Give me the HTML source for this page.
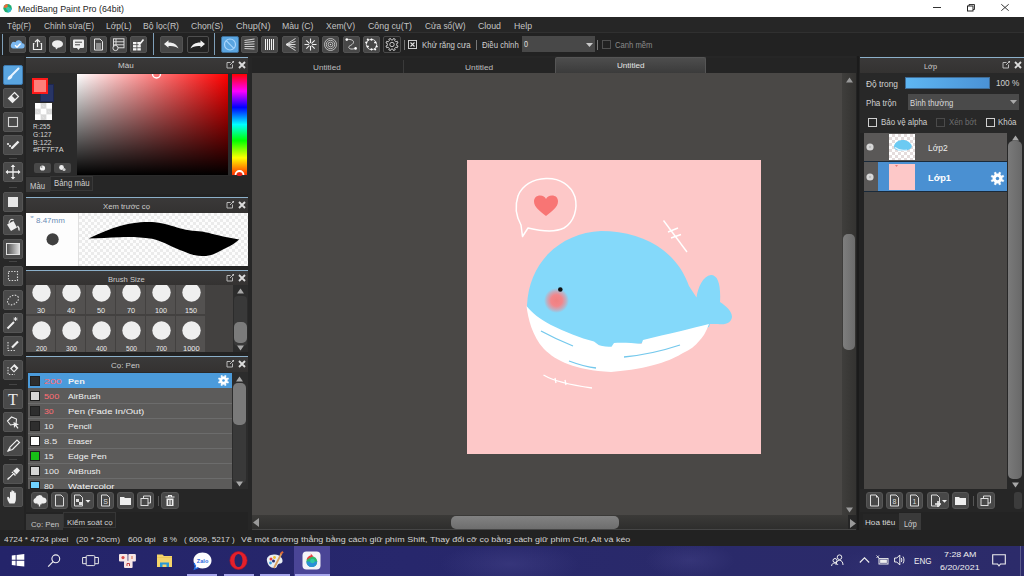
<!DOCTYPE html><html><head><meta charset="utf-8"><style>
*{margin:0;padding:0;box-sizing:border-box}
html,body{width:1024px;height:576px;overflow:hidden;background:#262626;font-family:"Liberation Sans",sans-serif;font-size:10px;color:#d0d0d0}
.a{position:absolute}
.t{position:absolute;white-space:nowrap;line-height:1}
svg{position:absolute;overflow:visible}
</style></head><body>
<div class="a" style="left:0px;top:0px;width:1024px;height:17px;background:#fff"></div>
<svg style="left:3px;top:3px" width="9" height="10" viewBox="0 0 9 10"><circle cx="4.6" cy="5.2" r="4.2" fill="#1fae6e"/><path d="M4.6 1A4.2 4.2 0 0 0 .6 4.4L4.6 5.2Z" fill="#f06a3a"/><path d="M4.6 5.2L8.8 5.2A4.2 4.2 0 0 1 4.6 9.4Z" fill="#2fb8c8"/><circle cx="5" cy="5.6" r="1.8" fill="#3cc6a8"/></svg>
<div class="t" id="t0" style="left:17.80px;top:5.15px;font-size:8.35px;color:#1e1e1e;;transform:scaleX(1.0580);transform-origin:0 0;">MediBang Paint Pro (64bit)</div>
<div class="a" style="left:933px;top:7px;width:8px;height:1px;background:#333"></div>
<svg style="left:967px;top:4px" width="8" height="7" viewBox="0 0 8 7"><rect x=".5" y="2" width="5.5" height="5" fill="none" stroke="#222" stroke-width="1"/><path d="M2 2V.5H7.5V5.5H6" fill="none" stroke="#222" stroke-width=".9"/></svg>
<svg style="left:1001px;top:4px" width="8" height="7" viewBox="0 0 8 7"><path d="M.3 .3L7.7 6.7M7.7 .3L.3 6.7" stroke="#222" stroke-width=".9"/></svg>
<div class="a" style="left:0px;top:17px;width:1024px;height:16px;background:#262626"></div>
<div class="a" style="left:0px;top:32px;width:1024px;height:1px;background:#303030"></div>
<div class="t" id="t1" style="left:6.90px;top:21.61px;font-size:8.73px;color:#c4c4c4;;transform:scaleX(0.9176);transform-origin:0 0;">Tệp(F)</div>
<div class="t" id="t2" style="left:44.00px;top:21.61px;font-size:8.73px;color:#c4c4c4;;transform:scaleX(0.9639);transform-origin:0 0;">Chỉnh sửa(E)</div>
<div class="t" id="t3" style="left:105.50px;top:21.61px;font-size:8.73px;color:#c4c4c4;;transform:scaleX(0.9778);transform-origin:0 0;">Lớp(L)</div>
<div class="t" id="t4" style="left:143.00px;top:21.61px;font-size:8.73px;color:#c4c4c4;;transform:scaleX(0.9905);transform-origin:0 0;">Bộ lọc(R)</div>
<div class="t" id="t5" style="left:191.00px;top:21.61px;font-size:8.73px;color:#c4c4c4;;transform:scaleX(0.9856);transform-origin:0 0;">Chọn(S)</div>
<div class="t" id="t6" style="left:235.50px;top:21.61px;font-size:8.73px;color:#c4c4c4;;transform:scaleX(1.0469);transform-origin:0 0;">Chụp(N)</div>
<div class="t" id="t7" style="left:282.00px;top:21.61px;font-size:8.73px;color:#c4c4c4;;transform:scaleX(1.0000);transform-origin:0 0;">Màu (C)</div>
<div class="t" id="t8" style="left:326.00px;top:21.61px;font-size:8.73px;color:#c4c4c4;;transform:scaleX(0.9810);transform-origin:0 0;">Xem(V)</div>
<div class="t" id="t9" style="left:368.00px;top:21.61px;font-size:8.73px;color:#c4c4c4;;transform:scaleX(1.0090);transform-origin:0 0;">Công cụ(T)</div>
<div class="t" id="t10" style="left:425.00px;top:21.61px;font-size:8.73px;color:#c4c4c4;;transform:scaleX(0.9495);transform-origin:0 0;">Cửa sổ(W)</div>
<div class="t" id="t11" style="left:478.00px;top:21.61px;font-size:8.73px;color:#c4c4c4;;transform:scaleX(1.0096);transform-origin:0 0;">Cloud</div>
<div class="t" id="t12" style="left:514.00px;top:21.61px;font-size:8.73px;color:#c4c4c4;;transform:scaleX(1.0035);transform-origin:0 0;">Help</div>
<div class="a" style="left:0px;top:33px;width:1024px;height:23px;background:#222222"></div>
<div class="a" style="left:2px;top:34px;width:1px;height:21px;background:#7f9fb8"></div>
<div class="a" style="left:9px;top:36px;width:17px;height:17px;background:#474747;border:1px solid #525252;border-radius:2px"></div>
<div class="a" style="left:29px;top:36px;width:17px;height:17px;background:#474747;border:1px solid #525252;border-radius:2px"></div>
<div class="a" style="left:49px;top:36px;width:17px;height:17px;background:#474747;border:1px solid #525252;border-radius:2px"></div>
<div class="a" style="left:70px;top:36px;width:17px;height:17px;background:#474747;border:1px solid #525252;border-radius:2px"></div>
<div class="a" style="left:90px;top:36px;width:17px;height:17px;background:#474747;border:1px solid #525252;border-radius:2px"></div>
<div class="a" style="left:110px;top:36px;width:17px;height:17px;background:#474747;border:1px solid #525252;border-radius:2px"></div>
<div class="a" style="left:130px;top:36px;width:17px;height:17px;background:#474747;border:1px solid #525252;border-radius:2px"></div>
<div class="a" style="left:153px;top:33px;width:1px;height:22px;background:#7f9fb8"></div>
<div class="a" style="left:160px;top:36px;width:23px;height:17px;background:#474747;border:1px solid #525252;border-radius:2px"></div>
<div class="a" style="left:187px;top:36px;width:22px;height:17px;background:#222;border:1px solid #4e4e4e;border-radius:2px"></div>
<div class="a" style="left:214px;top:33px;width:1px;height:22px;background:#7f9fb8"></div>
<div class="a" style="left:221px;top:36px;width:18px;height:17px;background:#5aa5e0;border:1px solid #3d6f99;border-radius:2px"></div>
<div class="a" style="left:241px;top:36px;width:17px;height:17px;background:#474747;border:1px solid #525252;border-radius:2px"></div>
<div class="a" style="left:261px;top:36px;width:17px;height:17px;background:#474747;border:1px solid #525252;border-radius:2px"></div>
<div class="a" style="left:282px;top:36px;width:17px;height:17px;background:#474747;border:1px solid #525252;border-radius:2px"></div>
<div class="a" style="left:302px;top:36px;width:17px;height:17px;background:#474747;border:1px solid #525252;border-radius:2px"></div>
<div class="a" style="left:322px;top:36px;width:17px;height:17px;background:#474747;border:1px solid #525252;border-radius:2px"></div>
<div class="a" style="left:343px;top:36px;width:17px;height:17px;background:#474747;border:1px solid #525252;border-radius:2px"></div>
<div class="a" style="left:363px;top:36px;width:17px;height:17px;background:#474747;border:1px solid #525252;border-radius:2px"></div>
<div class="a" style="left:383px;top:36px;width:18px;height:17px;background:#232323;border:1px solid #4a4a4a;border-radius:2px"></div>
<svg style="left:9px;top:36px" width="17" height="17" viewBox="0 0 17 17"><path d="M4 12.5H13A2.6 2.6 0 0 0 13.2 7.3A3.6 3.6 0 0 0 6.4 6.2A3 3 0 0 0 4 12.5Z" fill="#7cb8f0"/><path d="M6 9.3L8 11.2L11.6 7.4" fill="none" stroke="#fff" stroke-width="1.4"/></svg>
<svg style="left:29px;top:36px" width="17" height="17" viewBox="0 0 17 17"><path d="M5.5 7.5H4.5V13.5H12.5V7.5H11.5" fill="none" stroke="#eee" stroke-width="1.2"/><path d="M8.5 11V3.5M6 6L8.5 3.5L11 6" fill="none" stroke="#eee" stroke-width="1.2"/></svg>
<svg style="left:49px;top:36px" width="17" height="17" viewBox="0 0 17 17"><ellipse cx="8.5" cy="8" rx="5.5" ry="3.8" fill="#eee"/><path d="M6.5 11L7 13.5L9.5 11.5Z" fill="#eee"/></svg>
<svg style="left:70px;top:36px" width="17" height="17" viewBox="0 0 17 17"><rect x="3" y="3.5" width="11" height="8.5" rx="1" fill="#eee"/><path d="M7 12L8.5 14L10 12Z" fill="#eee"/><path d="M5 6.2H12M5 8.8H10" stroke="#474747" stroke-width="1"/></svg>
<svg style="left:90px;top:36px" width="17" height="17" viewBox="0 0 17 17"><path d="M4.5 3H10L12.5 5.5V14H4.5Z" fill="none" stroke="#e8e8e8" stroke-width="1"/><path d="M6 8H11M6 10H11M6 12H11" stroke="#e8e8e8" stroke-width=".9"/></svg>
<svg style="left:110px;top:36px" width="17" height="17" viewBox="0 0 17 17"><rect x="3.5" y="2.8" width="10.5" height="9" fill="none" stroke="#e8e8e8" stroke-width=".9"/><path d="M3.5 5.8H14M3.5 8.8H14M6 2.8V11.8" stroke="#e8e8e8" stroke-width=".9"/><circle cx="5.5" cy="12" r="2.6" fill="#474747" stroke="#e8e8e8" stroke-width=".9"/></svg>
<svg style="left:130px;top:36px" width="17" height="17" viewBox="0 0 17 17"><rect x="3" y="6" width="3.5" height="2.3" fill="#f4f4f4"/><rect x="7.3" y="6" width="3.5" height="2.3" fill="#f4f4f4"/><rect x="3" y="9.1" width="3.5" height="2.3" fill="#f4f4f4"/><rect x="7.3" y="9.1" width="3.5" height="2.3" fill="#f4f4f4"/><rect x="3" y="12.2" width="3.5" height="2.3" fill="#f4f4f4"/><rect x="7.3" y="12.2" width="3.5" height="2.3" fill="#f4f4f4"/><path d="M9 9L13.5 3.5" stroke="#f4f4f4" stroke-width="1.6"/></svg>
<svg style="left:160px;top:36px" width="23" height="17" viewBox="0 0 23 17"><path d="M4 8L8.5 4.2V6.6C13 6.4 17 8.5 18.5 12.5C16.5 10.5 13 9.6 8.5 10V11.8Z" fill="#f0f0f0"/></svg>
<svg style="left:187px;top:36px" width="22" height="17" viewBox="0 0 22 17"><path d="M18 8L13.5 4.2V6.6C9 6.4 5 8.5 3.5 12.5C5.5 10.5 9 9.6 13.5 10V11.8Z" fill="#f0f0f0"/></svg>
<svg style="left:221px;top:36px" width="18" height="17" viewBox="0 0 18 17"><circle cx="9" cy="8.5" r="5.5" fill="none" stroke="#a8d4fa" stroke-width="1.2"/><path d="M5.2 4.7L12.8 12.3" stroke="#a8d4fa" stroke-width="1.2"/></svg>
<svg style="left:241px;top:36px" width="17" height="17" viewBox="0 0 17 17"><path d="M3.5 4.5L13.5 3M3.5 6.5L13.5 5.5M3.5 8.5L13.5 8M3.5 10.5L13.5 10.5M3.5 12.5L13.5 13" stroke="#e0e0e0" stroke-width=".9"/></svg>
<svg style="left:261px;top:36px" width="17" height="17" viewBox="0 0 17 17"><path d="M4.5 3V14M6.5 3V14M8.5 3V14M10.5 3V14M12.5 3V14" stroke="#f0f0f0" stroke-width="1"/></svg>
<svg style="left:282px;top:36px" width="17" height="17" viewBox="0 0 17 17"><path d="M4 8.5L13.5 2.5M4 8.5L13.5 5.5M4 8.5L13.5 8.5M4 8.5L13.5 11.5M4 8.5L13.5 14.5" stroke="#e8e8e8" stroke-width=".9"/></svg>
<svg style="left:302px;top:36px" width="17" height="17" viewBox="0 0 17 17"><path d="M8.5 2.5V14.5M2.5 8.5H14.5M4.3 4.3L12.7 12.7M12.7 4.3L4.3 12.7" stroke="#f0f0f0" stroke-width="1.1"/><circle cx="8.5" cy="8.5" r="1.6" fill="#474747"/></svg>
<svg style="left:322px;top:36px" width="17" height="17" viewBox="0 0 17 17"><circle cx="8.5" cy="8.5" r="6" fill="none" stroke="#dcdcdc" stroke-width=".75"/><circle cx="8.5" cy="8.5" r="4.2" fill="none" stroke="#dcdcdc" stroke-width=".75"/><circle cx="8.5" cy="8.5" r="2.4" fill="none" stroke="#dcdcdc" stroke-width=".75"/><circle cx="8.5" cy="8.5" r=".8" fill="#dcdcdc"/></svg>
<svg style="left:343px;top:36px" width="17" height="17" viewBox="0 0 17 17"><path d="M4 3.5C8 3 12 4.5 10 7.5C8 10 4 10 6.5 12.5C8 13.5 10 13 12.5 12.5" fill="none" stroke="#dcdcdc" stroke-width=".9"/><circle cx="3.8" cy="3.6" r="1.3" fill="#fff"/><circle cx="12.6" cy="12.4" r="1.3" fill="#fff"/></svg>
<svg style="left:363px;top:36px" width="17" height="17" viewBox="0 0 17 17"><circle cx="8.5" cy="8.5" r="5.2" fill="none" stroke="#e0e0e0" stroke-width=".9"/><circle cx="13.70" cy="10.48" r="1.1" fill="#fff"/><circle cx="12.18" cy="13.30" r="1.1" fill="#fff"/><circle cx="8.50" cy="13.31" r="1.1" fill="#fff"/><circle cx="4.82" cy="10.50" r="1.1" fill="#fff"/><circle cx="3.30" cy="6.52" r="1.1" fill="#fff"/><circle cx="4.82" cy="3.70" r="1.1" fill="#fff"/><circle cx="8.50" cy="3.69" r="1.1" fill="#fff"/><circle cx="12.18" cy="6.50" r="1.1" fill="#fff"/></svg>
<svg style="left:383px;top:36px" width="18" height="17" viewBox="0 0 18 17"><path d="M13.60 8.50 L13.53 9.31 L15.02 9.97 L14.30 11.72 L12.77 11.13 L12.25 11.75 L11.63 12.27 L12.22 13.80 L10.47 14.52 L9.81 13.03 L9.00 13.10 L8.19 13.03 L7.53 14.52 L5.78 13.80 L6.37 12.27 L5.75 11.75 L5.23 11.13 L3.70 11.72 L2.98 9.97 L4.47 9.31 L4.40 8.50 L4.47 7.69 L2.98 7.03 L3.70 5.28 L5.23 5.87 L5.75 5.25 L6.37 4.73 L5.78 3.20 L7.53 2.48 L8.19 3.97 L9.00 3.90 L9.81 3.97 L10.47 2.48 L12.22 3.20 L11.63 4.73 L12.25 5.25 L12.77 5.87 L14.30 5.28 L15.02 7.03 L13.53 7.69Z" fill="none" stroke="#d8d8d8" stroke-width=".9" stroke-linejoin="round"/><circle cx="9" cy="8.5" r="2.2" fill="none" stroke="#d8d8d8" stroke-width=".9"/></svg>
<div class="a" style="left:404px;top:40px;width:1px;height:10px;background:#777"></div>
<div class="a" style="left:408px;top:40px;width:9px;height:9px;border:1px solid #cfcfcf"></div>
<svg style="left:408px;top:40px" width="9" height="9" viewBox="0 0 9 9"><path d="M2.5 2.5L6.5 6.5M6.5 2.5L2.5 6.5" stroke="#e0e0e0" stroke-width="1.1"/></svg>
<div class="t" id="t13" style="left:421.50px;top:41.14px;font-size:8.47px;color:#cfcfcf;;transform:scaleX(0.9319);transform-origin:0 0;">Khử răng cưa</div>
<div class="a" style="left:476px;top:40px;width:1px;height:10px;background:#777"></div>
<div class="t" id="t14" style="left:481.50px;top:41.34px;font-size:8.47px;color:#cfcfcf;;transform:scaleX(0.9180);transform-origin:0 0;">Điều chỉnh</div>
<div class="a" style="left:522px;top:36px;width:73px;height:16px;background:#484848"></div>
<div class="t" id="t15" style="left:524.00px;top:41.37px;font-size:8.22px;color:#e0e0e0;;transform:scaleX(0.8737);transform-origin:0 0;">0</div>
<svg style="left:586px;top:43px" width="7" height="4" viewBox="0 0 7 4"><path d="M0 0H7L3.5 4Z" fill="#c8c8c8"/></svg>
<div class="a" style="left:597px;top:40px;width:1px;height:10px;background:#777"></div>
<div class="a" style="left:602px;top:40px;width:9px;height:9px;border:1px solid #505050"></div>
<div class="t" id="t16" style="left:615.00px;top:41.34px;font-size:8.47px;color:#8a8a8a;;transform:scaleX(0.9053);transform-origin:0 0;">Canh mềm</div>
<div class="a" style="left:0px;top:56px;width:26px;height:474px;background:#282828"></div>
<div class="a" style="left:24px;top:56px;width:2px;height:474px;background:#1e1e1e"></div>
<div class="a" style="left:3px;top:65px;width:20px;height:20px;background:#5aa5e0;border:1px solid #3d7ab0;border-radius:2px"></div>
<div class="a" style="left:3px;top:88px;width:20px;height:20px;background:#494949;border:1px solid #555555;border-radius:2px"></div>
<div class="a" style="left:3px;top:112px;width:20px;height:20px;background:#494949;border:1px solid #555555;border-radius:2px"></div>
<div class="a" style="left:3px;top:135px;width:20px;height:20px;background:#494949;border:1px solid #555555;border-radius:2px"></div>
<div class="a" style="left:3px;top:162px;width:20px;height:20px;background:#494949;border:1px solid #555555;border-radius:2px"></div>
<div class="a" style="left:3px;top:192px;width:20px;height:20px;background:#494949;border:1px solid #555555;border-radius:2px"></div>
<div class="a" style="left:3px;top:215px;width:20px;height:20px;background:#494949;border:1px solid #555555;border-radius:2px"></div>
<div class="a" style="left:3px;top:239px;width:20px;height:20px;background:#494949;border:1px solid #555555;border-radius:2px"></div>
<div class="a" style="left:3px;top:266px;width:20px;height:20px;background:#494949;border:1px solid #555555;border-radius:2px"></div>
<div class="a" style="left:3px;top:290px;width:20px;height:20px;background:#494949;border:1px solid #555555;border-radius:2px"></div>
<div class="a" style="left:3px;top:313px;width:20px;height:20px;background:#494949;border:1px solid #555555;border-radius:2px"></div>
<div class="a" style="left:3px;top:336px;width:20px;height:20px;background:#494949;border:1px solid #555555;border-radius:2px"></div>
<div class="a" style="left:3px;top:360px;width:20px;height:20px;background:#494949;border:1px solid #555555;border-radius:2px"></div>
<div class="a" style="left:3px;top:389px;width:20px;height:20px;background:#494949;border:1px solid #555555;border-radius:2px"></div>
<div class="a" style="left:3px;top:412px;width:20px;height:20px;background:#494949;border:1px solid #555555;border-radius:2px"></div>
<div class="a" style="left:3px;top:436px;width:20px;height:20px;background:#494949;border:1px solid #555555;border-radius:2px"></div>
<div class="a" style="left:3px;top:464px;width:20px;height:20px;background:#494949;border:1px solid #555555;border-radius:2px"></div>
<div class="a" style="left:3px;top:487px;width:20px;height:20px;background:#494949;border:1px solid #555555;border-radius:2px"></div>
<div class="a" style="left:9px;top:158px;width:8px;height:1px;background:#454545"></div>
<div class="a" style="left:9px;top:187px;width:8px;height:1px;background:#454545"></div>
<div class="a" style="left:9px;top:261px;width:8px;height:1px;background:#454545"></div>
<div class="a" style="left:9px;top:384px;width:8px;height:1px;background:#454545"></div>
<div class="a" style="left:9px;top:459px;width:8px;height:1px;background:#454545"></div>
<svg style="left:3px;top:65px" width="20" height="20" viewBox="0 0 20 20"><path d="M15.5 3.5L8 11" stroke="#e8f4ff" stroke-width="2" stroke-linecap="round"/><path d="M8.5 10.5C6 10 4.5 12 4.5 14.5C6.5 15 9 14 9.5 11.5Z" fill="#e8f4ff"/></svg>
<svg style="left:3px;top:88px" width="20" height="20" viewBox="0 0 20 20"><path d="M11.5 4.5L15.5 8.5L9.5 14.5L5.5 10.5Z" fill="none" stroke="#eee" stroke-width="1.2"/><path d="M8.5 7.5L12.5 11.5L9.5 14.5L5.5 10.5Z" fill="#eee"/></svg>
<svg style="left:3px;top:112px" width="20" height="20" viewBox="0 0 20 20"><rect x="5.5" y="5.5" width="9" height="9" fill="none" stroke="#d8d8d8" stroke-width="1.1"/></svg>
<svg style="left:3px;top:135px" width="20" height="20" viewBox="0 0 20 20"><path d="M9 13L15.5 6.5" stroke="#eee" stroke-width="2.4"/><circle cx="5" cy="9" r="1.1" fill="#eee"/><circle cx="7" cy="11" r="1.1" fill="#eee"/><circle cx="9" cy="13" r="1.1" fill="#eee"/></svg>
<svg style="left:3px;top:162px" width="20" height="20" viewBox="0 0 20 20"><path d="M10 3.5V16.5M3.5 10H16.5" stroke="#eee" stroke-width="1.3"/><path d="M10 2.5L12.3 5H7.7ZM10 17.5L12.3 15H7.7ZM2.5 10L5 7.7V12.3ZM17.5 10L15 7.7V12.3Z" fill="#eee"/></svg>
<svg style="left:3px;top:192px" width="20" height="20" viewBox="0 0 20 20"><rect x="5" y="5" width="10" height="10" fill="#e8e8e8"/></svg>
<svg style="left:3px;top:215px" width="20" height="20" viewBox="0 0 20 20"><path d="M4 9.5L10.5 6L14 12.5L8 16Z" fill="#eee"/><path d="M6 8.5C6 5 8.5 3.5 10.5 4.8" fill="none" stroke="#eee" stroke-width="1.1"/><path d="M14.5 11C16 12.5 16.5 14 16 15.5" stroke="#eee" stroke-width="1.4" fill="none"/></svg>
<div class="a" style="left:6px;top:243px;width:14px;height:12px;border:1px solid #e0e0e0;background:linear-gradient(to right,#505050,#d8d8d8)"></div>
<svg style="left:3px;top:266px" width="20" height="20" viewBox="0 0 20 20"><rect x="5.5" y="5.5" width="9" height="9" fill="none" stroke="#d8d8d8" stroke-width="1.1" stroke-dasharray="1.4 1.4"/></svg>
<svg style="left:3px;top:290px" width="20" height="20" viewBox="0 0 20 20"><ellipse cx="10" cy="10" rx="6" ry="4.2" transform="rotate(-35 10 10)" fill="none" stroke="#d8d8d8" stroke-width="1.1" stroke-dasharray="1.4 1.4"/></svg>
<svg style="left:3px;top:313px" width="20" height="20" viewBox="0 0 20 20"><path d="M4.5 15.5L11 9" stroke="#eee" stroke-width="2"/><path d="M12.5 4V8M10.5 6H14.5M11.2 4.7L13.8 7.3M13.8 4.7L11.2 7.3" stroke="#eee" stroke-width=".9"/></svg>
<svg style="left:3px;top:336px" width="20" height="20" viewBox="0 0 20 20"><path d="M5 6V14.5H13" fill="none" stroke="#d8d8d8" stroke-width="1.1" stroke-dasharray="1.4 1.4"/><path d="M9 11.5L15 5.5" stroke="#eee" stroke-width="2.2"/></svg>
<svg style="left:3px;top:360px" width="20" height="20" viewBox="0 0 20 20"><path d="M5 7V14.5H12" fill="none" stroke="#d8d8d8" stroke-width="1.1" stroke-dasharray="1.4 1.4"/><path d="M11.5 4L15.5 8L11 12.5L7 8.5Z" fill="#eee"/><path d="M11 6.5L13.2 8.7L11 10.9L8.8 8.7Z" fill="#4a4a4a"/></svg>
<svg style="left:3px;top:389px" width="20" height="20" viewBox="0 0 20 20"><text x="10" y="16" font-family="Liberation Serif" font-size="16" fill="#eee" text-anchor="middle">T</text></svg>
<svg style="left:3px;top:412px" width="20" height="20" viewBox="0 0 20 20"><path d="M4.5 9L8.5 5L13.5 7L13 12L7.5 13Z" fill="none" stroke="#eee" stroke-width="1.1"/><path d="M10.5 10L16 12.5L13.5 13.2L15.5 16L14.5 16.8L12.5 14L11 16Z" fill="#eee"/></svg>
<svg style="left:3px;top:436px" width="20" height="20" viewBox="0 0 20 20"><path d="M5 15L7 11L14 4L16.5 6.5L9.5 13.5Z" fill="none" stroke="#eee" stroke-width="1.2"/><path d="M5 15L7.5 12.5" stroke="#eee" stroke-width="1.2"/></svg>
<svg style="left:3px;top:464px" width="20" height="20" viewBox="0 0 20 20"><path d="M4.5 15.5L11 9" stroke="#eee" stroke-width="1.4"/><path d="M10 7L14 3.5L17 6.5L13.5 10.5Z" fill="#eee"/><path d="M9 8L12.5 11.5" stroke="#eee" stroke-width="1.4"/><path d="M6 13L11 8" stroke="#4a4a4a" stroke-width=".7"/></svg>
<svg style="left:3px;top:487px" width="20" height="20" viewBox="0 0 20 20"><path d="M6.5 16.5C5 14 4 12 4.2 10.5C4.5 9.5 5.5 9.5 6.3 10.8L7 12V5.5C7 4.5 8.4 4.5 8.4 5.5V9.5V4C8.4 3 9.9 3 9.9 4V9.5V4.8C9.9 3.8 11.4 3.8 11.4 4.8V9.8V6.2C11.4 5.2 12.9 5.2 12.9 6.2V12C12.9 14 12 15.5 11.5 16.5Z" fill="#f0f0f0"/></svg>
<div class="a" style="left:24px;top:56px;width:228px;height:474px;background:#232323"></div>
<div class="a" style="left:26px;top:57px;width:222px;height:1px;background:#8cb0ca"></div>
<div class="a" style="left:26px;top:58px;width:222px;height:15px;background:linear-gradient(#3a3939,#343231)"></div>
<div class="t" id="t17" style="left:117.50px;top:62.40px;font-size:7.97px;color:#cccccc;;transform:scaleX(1.0151);transform-origin:0 0;">Màu</div>
<svg style="left:226px;top:61px" width="8" height="8" viewBox="0 0 8 8"><path d="M4.5 1.5H1V7H6.5V3.5" fill="none" stroke="#b8b8b8" stroke-width="1"/><path d="M4 4L7.5 .5" stroke="#b8b8b8" stroke-width="1"/><circle cx="7.2" cy=".8" r=".9" fill="#ddd"/></svg>
<svg style="left:238px;top:61px" width="8" height="8" viewBox="0 0 8 8"><path d="M1 1L7 7M7 1L1 7" stroke="#dcdcdc" stroke-width="1.9"/></svg>
<div class="a" style="left:26px;top:73px;width:222px;height:103px;background:#2a2a2a"></div>
<div class="a" style="left:77px;top:74px;width:151px;height:101px;background:linear-gradient(to bottom,rgba(0,0,0,0),#000),linear-gradient(to right,#fff,#f00)"></div>
<div class="a" style="left:232px;top:74px;width:15px;height:101px;background:linear-gradient(to bottom,#ff0000 0%,#ff00ff 17%,#0000ff 33%,#00ffff 50%,#00ff00 66%,#ffff00 83%,#ff3000 100%)"></div>
<svg style="left:151px;top:69px" width="11" height="11" viewBox="0 0 11 11"><path d="M1.5 5A4 4 0 0 0 9.5 5" fill="none" stroke="#fff" stroke-width="1.4"/></svg>
<svg style="left:233px;top:166px" width="13" height="9" viewBox="0 0 13 9"><path d="M2.5 9A4 4 0 0 1 10.5 9" fill="none" stroke="#fff" stroke-width="1.8"/><circle cx="6.5" cy="9" r="2.3" fill="#e02020"/></svg>
<div class="a" style="left:40px;top:84px;width:14px;height:18px;background:#283566;border:1px solid #1d2650"></div>
<div class="a" style="left:32px;top:78px;width:16px;height:16px;background:#ff7f7a;border:2px solid #ff1a1a"></div>
<div class="a" style="left:35px;top:103px;width:17px;height:17px;background-color:#fff;background-image:linear-gradient(45deg,#d8d8d8 25%,transparent 25%,transparent 75%,#d8d8d8 75%),linear-gradient(45deg,#d8d8d8 25%,transparent 25%,transparent 75%,#d8d8d8 75%);background-size:11.4px 11.4px;background-position:0 0,5.7px 5.7px"></div>
<div class="t" id="t18" style="left:32.75px;top:123.89px;font-size:6.49px;color:#d6d6d6;;transform:scaleX(0.9964);transform-origin:0 0;">R:255</div>
<div class="t" id="t19" style="left:32.75px;top:131.85px;font-size:6.76px;color:#d6d6d6;;transform:scaleX(1.0059);transform-origin:0 0;">G:127</div>
<div class="t" id="t20" style="left:32.75px;top:140.45px;font-size:6.76px;color:#d6d6d6;;transform:scaleX(1.0487);transform-origin:0 0;">B:122</div>
<div class="t" id="t21" style="left:32.75px;top:145.03px;font-size:7.70px;color:#d6d6d6;background:#2a2a2a;padding-top:0.5px;transform:scaleX(0.9549);transform-origin:0 0;">#FF7F7A</div>
<div class="a" style="left:34px;top:163px;width:17px;height:10px;background:#484848;border-radius:2px"></div>
<div class="a" style="left:54px;top:163px;width:17px;height:10px;background:#484848;border-radius:2px"></div>
<svg style="left:34px;top:163px" width="17" height="10" viewBox="0 0 17 10"><circle cx="8.5" cy="5" r="2.6" fill="#eee"/><circle cx="7.5" cy="4" r="1" fill="#999"/></svg>
<svg style="left:54px;top:163px" width="17" height="10" viewBox="0 0 17 10"><circle cx="7.5" cy="4.5" r="2.4" fill="#eee"/><circle cx="10" cy="6.5" r="1.6" fill="#ccc"/></svg>
<div class="a" style="left:26px;top:176px;width:222px;height:18px;background:#262626"></div>
<div class="a" style="left:26px;top:177px;width:24px;height:15px;background:#3a3a3a"></div>
<div class="a" style="left:50px;top:176px;width:43px;height:15px;background:#2a2a2a;border:1px solid #383838"></div>
<div class="t" id="t22" style="left:30.25px;top:181.80px;font-size:8.85px;color:#cfcfcf;;transform:scaleX(0.8711);transform-origin:0 0;">Màu</div>
<div class="t" id="t23" style="left:53.60px;top:180.47px;font-size:8.22px;color:#cfcfcf;;transform:scaleX(0.9515);transform-origin:0 0;">Bảng màu</div>
<div class="a" style="left:26px;top:197px;width:222px;height:1px;background:#8cb0ca"></div>
<div class="a" style="left:26px;top:198px;width:222px;height:15px;background:linear-gradient(#3a3939,#343231)"></div>
<div class="t" id="t24" style="left:102.50px;top:202.65px;font-size:7.97px;color:#cccccc;;transform:scaleX(0.9660);transform-origin:0 0;">Xem trước cọ</div>
<svg style="left:226px;top:201px" width="8" height="8" viewBox="0 0 8 8"><path d="M4.5 1.5H1V7H6.5V3.5" fill="none" stroke="#b8b8b8" stroke-width="1"/><path d="M4 4L7.5 .5" stroke="#b8b8b8" stroke-width="1"/><circle cx="7.2" cy=".8" r=".9" fill="#ddd"/></svg>
<svg style="left:238px;top:201px" width="8" height="8" viewBox="0 0 8 8"><path d="M1 1L7 7M7 1L1 7" stroke="#dcdcdc" stroke-width="1.9"/></svg>
<div class="a" style="left:26px;top:213px;width:53px;height:53px;background:#fdfdfd"></div>
<div class="a" style="left:79px;top:213px;width:169px;height:53px;background-color:#fdfdfd;background-image:linear-gradient(45deg,#ebebeb 25%,transparent 25%,transparent 75%,#ebebeb 75%),linear-gradient(45deg,#ebebeb 25%,transparent 25%,transparent 75%,#ebebeb 75%);background-size:6px 6px;background-position:0 0,3px 3px"></div>
<div class="a" style="left:78px;top:213px;width:1px;height:53px;background:#e0e0e0"></div>
<div class="t" id="t25" style="left:29.50px;top:214.94px;font-size:6.08px;color:#7a9cc0;;transform:scaleX(1.6842);transform-origin:0 0;">*</div>
<div class="t" id="t26" style="left:36.00px;top:216.73px;font-size:7.70px;color:#6a8cb4;;transform:scaleX(1.0367);transform-origin:0 0;">8.47mm</div>
<svg style="left:46px;top:233px" width="13" height="13" viewBox="0 0 13 13"><circle cx="6.6" cy="6.3" r="6.1" fill="#404040"/></svg>
<svg style="left:0;top:0" width="1024" height="576" viewBox="0 0 1024 576"><path d="M88.7 238.6 C100 233 112 228 120 226 C128 223.5 140 221.5 152 222 C160 222.5 170 225 177 227.5 C184 230 194 231 202 231.5 C210 233 220 236 227 237.3 L239.2 239.4 C235 243 231 245.5 227 247.5 C222 250 218 252.5 214.5 253.7 C210 255.5 206 256.3 202 256 C196 255.5 193 255 189.5 253.7 C184 251.5 181 250.5 177 248.7 C172 246.5 168 244.8 164.5 243 C160 241 156 239.7 152 238.7 C140 237 130 236.8 120 237.2 C110 237.6 98 238.2 88.7 238.6Z" fill="#000"/></svg>
<div class="a" style="left:26px;top:270px;width:222px;height:1px;background:#8cb0ca"></div>
<div class="a" style="left:26px;top:271px;width:222px;height:15px;background:linear-gradient(#3a3939,#343231)"></div>
<div class="t" id="t27" style="left:107.50px;top:275.65px;font-size:7.97px;color:#cccccc;;transform:scaleX(0.9534);transform-origin:0 0;">Brush Size</div>
<svg style="left:226px;top:274px" width="8" height="8" viewBox="0 0 8 8"><path d="M4.5 1.5H1V7H6.5V3.5" fill="none" stroke="#b8b8b8" stroke-width="1"/><path d="M4 4L7.5 .5" stroke="#b8b8b8" stroke-width="1"/><circle cx="7.2" cy=".8" r=".9" fill="#ddd"/></svg>
<svg style="left:238px;top:274px" width="8" height="8" viewBox="0 0 8 8"><path d="M1 1L7 7M7 1L1 7" stroke="#dcdcdc" stroke-width="1.9"/></svg>
<div class="a" style="left:26px;top:285px;width:207px;height:67px;background:#434140"></div>
<div class="a" style="left:26px;top:285px;width:207px;height:67px;overflow:hidden">
<div class="a" style="left:0px;top:-7px;width:29px;height:36px;background:#535150"></div>
<svg style="left:6px;top:-2px" width="19" height="19" viewBox="0 0 19 19"><circle cx="9.5" cy="9.5" r="9.2" fill="#efefef"/></svg>
<div class="a" style="left:30px;top:-7px;width:29px;height:36px;background:#535150"></div>
<svg style="left:36px;top:-2px" width="19" height="19" viewBox="0 0 19 19"><circle cx="9.5" cy="9.5" r="9.2" fill="#efefef"/></svg>
<div class="a" style="left:60px;top:-7px;width:29px;height:36px;background:#535150"></div>
<svg style="left:66px;top:-2px" width="19" height="19" viewBox="0 0 19 19"><circle cx="9.5" cy="9.5" r="9.2" fill="#efefef"/></svg>
<div class="a" style="left:90px;top:-7px;width:29px;height:36px;background:#535150"></div>
<svg style="left:96px;top:-2px" width="19" height="19" viewBox="0 0 19 19"><circle cx="9.5" cy="9.5" r="9.2" fill="#efefef"/></svg>
<div class="a" style="left:120px;top:-7px;width:29px;height:36px;background:#535150"></div>
<svg style="left:126px;top:-2px" width="19" height="19" viewBox="0 0 19 19"><circle cx="9.5" cy="9.5" r="9.2" fill="#efefef"/></svg>
<div class="a" style="left:150px;top:-7px;width:29px;height:36px;background:#535150"></div>
<svg style="left:156px;top:-2px" width="19" height="19" viewBox="0 0 19 19"><circle cx="9.5" cy="9.5" r="9.2" fill="#efefef"/></svg>
<div class="a" style="left:0px;top:31px;width:29px;height:36px;background:#535150"></div>
<svg style="left:6px;top:36px" width="19" height="19" viewBox="0 0 19 19"><circle cx="9.5" cy="9.5" r="9.2" fill="#efefef"/></svg>
<div class="a" style="left:30px;top:31px;width:29px;height:36px;background:#535150"></div>
<svg style="left:36px;top:36px" width="19" height="19" viewBox="0 0 19 19"><circle cx="9.5" cy="9.5" r="9.2" fill="#efefef"/></svg>
<div class="a" style="left:60px;top:31px;width:29px;height:36px;background:#535150"></div>
<svg style="left:66px;top:36px" width="19" height="19" viewBox="0 0 19 19"><circle cx="9.5" cy="9.5" r="9.2" fill="#efefef"/></svg>
<div class="a" style="left:90px;top:31px;width:29px;height:36px;background:#535150"></div>
<svg style="left:96px;top:36px" width="19" height="19" viewBox="0 0 19 19"><circle cx="9.5" cy="9.5" r="9.2" fill="#efefef"/></svg>
<div class="a" style="left:120px;top:31px;width:29px;height:36px;background:#535150"></div>
<svg style="left:126px;top:36px" width="19" height="19" viewBox="0 0 19 19"><circle cx="9.5" cy="9.5" r="9.2" fill="#efefef"/></svg>
<div class="a" style="left:150px;top:31px;width:29px;height:36px;background:#535150"></div>
<svg style="left:156px;top:36px" width="19" height="19" viewBox="0 0 19 19"><circle cx="9.5" cy="9.5" r="9.2" fill="#efefef"/></svg>
</div>
<div class="t" id="t28" style="left:37.10px;top:306.78px;font-size:7.30px;color:#ececec;;transform:scaleX(1.0031);transform-origin:0 0;">30</div>
<div class="t" id="t29" style="left:67.10px;top:306.78px;font-size:7.30px;color:#ececec;;transform:scaleX(1.0031);transform-origin:0 0;">40</div>
<div class="t" id="t30" style="left:97.10px;top:306.78px;font-size:7.30px;color:#ececec;;transform:scaleX(1.0031);transform-origin:0 0;">50</div>
<div class="t" id="t31" style="left:127.10px;top:306.78px;font-size:7.30px;color:#ececec;;transform:scaleX(1.0031);transform-origin:0 0;">70</div>
<div class="t" id="t32" style="left:155.00px;top:306.78px;font-size:7.30px;color:#ececec;;transform:scaleX(0.9846);transform-origin:0 0;">100</div>
<div class="t" id="t33" style="left:185.00px;top:306.78px;font-size:7.30px;color:#ececec;;transform:scaleX(0.9846);transform-origin:0 0;">150</div>
<div class="t" id="t34" style="left:35.75px;top:344.78px;font-size:7.30px;color:#ececec;;transform:scaleX(0.9026);transform-origin:0 0;">200</div>
<div class="t" id="t35" style="left:65.75px;top:344.78px;font-size:7.30px;color:#ececec;;transform:scaleX(0.9026);transform-origin:0 0;">300</div>
<div class="t" id="t36" style="left:95.75px;top:344.78px;font-size:7.30px;color:#ececec;;transform:scaleX(0.9026);transform-origin:0 0;">400</div>
<div class="t" id="t37" style="left:125.75px;top:344.78px;font-size:7.30px;color:#ececec;;transform:scaleX(0.9026);transform-origin:0 0;">500</div>
<div class="t" id="t38" style="left:155.75px;top:344.78px;font-size:7.30px;color:#ececec;;transform:scaleX(0.9026);transform-origin:0 0;">700</div>
<div class="t" id="t39" style="left:182.50px;top:344.78px;font-size:7.30px;color:#ececec;;transform:scaleX(1.0318);transform-origin:0 0;">1000</div>
<div class="a" style="left:233px;top:285px;width:15px;height:67px;background:#2c2c2c"></div>
<div class="a" style="left:234px;top:296px;width:13px;height:50px;background:#393939;border-radius:4px"></div>
<div class="a" style="left:234px;top:322px;width:13px;height:21px;background:#7b7b7b;border-radius:5px"></div>
<svg style="left:237px;top:288px" width="7" height="6" viewBox="0 0 7 6"><path d="M3.5 .5L7 5.5H0Z" fill="#a8a8a8"/></svg>
<svg style="left:237px;top:345px" width="7" height="6" viewBox="0 0 7 6"><path d="M3.5 5.5L7 .5H0Z" fill="#a8a8a8"/></svg>
<div class="a" style="left:26px;top:356px;width:222px;height:1px;background:#8cb0ca"></div>
<div class="a" style="left:26px;top:357px;width:222px;height:15px;background:linear-gradient(#3a3939,#343231)"></div>
<div class="t" id="t40" style="left:111.25px;top:361.65px;font-size:7.97px;color:#cccccc;;transform:scaleX(0.9984);transform-origin:0 0;">Cọ: Pen</div>
<svg style="left:226px;top:360px" width="8" height="8" viewBox="0 0 8 8"><path d="M4.5 1.5H1V7H6.5V3.5" fill="none" stroke="#b8b8b8" stroke-width="1"/><path d="M4 4L7.5 .5" stroke="#b8b8b8" stroke-width="1"/><circle cx="7.2" cy=".8" r=".9" fill="#ddd"/></svg>
<svg style="left:238px;top:360px" width="8" height="8" viewBox="0 0 8 8"><path d="M1 1L7 7M7 1L1 7" stroke="#dcdcdc" stroke-width="1.9"/></svg>
<div class="a" style="left:26px;top:372px;width:222px;height:117px;background:#2a2a2a"></div>
<div class="a" style="left:28px;top:373px;width:204px;height:15px;background:#4b9bdb;overflow:hidden"></div>
<div class="a" style="left:30px;top:376px;width:10px;height:10px;background:#2d2d2d;border:1px solid #202020"></div>
<div class="t" id="t41" style="left:44.30px;top:378.30px;font-size:7.97px;color:#ff6e75;;transform:scaleX(1.3387);transform-origin:0 0;">200</div>
<div class="t" id="t42" style="left:68.40px;top:378.30px;font-size:7.97px;color:#f2f2f2;font-weight:bold;transform:scaleX(1.1521);transform-origin:0 0;">Pen</div>
<div class="a" style="left:28px;top:388px;width:204px;height:15px;background:#5c5b5a;overflow:hidden"></div>
<div class="a" style="left:30px;top:391px;width:10px;height:10px;background:#d6d6d6;border:1px solid #202020"></div>
<div class="t" id="t43" style="left:44.30px;top:393.30px;font-size:7.97px;color:#ff6e75;;transform:scaleX(1.1506);transform-origin:0 0;">500</div>
<div class="t" id="t44" style="left:68.40px;top:393.30px;font-size:7.97px;color:#f2f2f2;;transform:scaleX(1.0634);transform-origin:0 0;">AirBrush</div>
<div class="a" style="left:28px;top:403px;width:204px;height:15px;background:#5c5b5a;overflow:hidden"></div>
<div class="a" style="left:28px;top:403px;width:204px;height:1px;background:#6c6c6c"></div>
<div class="a" style="left:30px;top:406px;width:10px;height:10px;background:#2e2e2e;border:1px solid #202020"></div>
<div class="t" id="t45" style="left:44.30px;top:408.30px;font-size:7.97px;color:#ff6e75;;transform:scaleX(1.0930);transform-origin:0 0;">30</div>
<div class="t" id="t46" style="left:68.40px;top:408.30px;font-size:7.97px;color:#f2f2f2;;transform:scaleX(1.1947);transform-origin:0 0;">Pen (Fade In/Out)</div>
<div class="a" style="left:28px;top:418px;width:204px;height:15px;background:#5c5b5a;overflow:hidden"></div>
<div class="a" style="left:28px;top:418px;width:204px;height:1px;background:#6c6c6c"></div>
<div class="a" style="left:30px;top:421px;width:10px;height:10px;background:#2e2e2e;border:1px solid #202020"></div>
<div class="t" id="t47" style="left:44.30px;top:423.30px;font-size:7.97px;color:#e8e8e8;;transform:scaleX(1.0930);transform-origin:0 0;">10</div>
<div class="t" id="t48" style="left:68.40px;top:423.30px;font-size:7.97px;color:#f2f2f2;;transform:scaleX(1.0912);transform-origin:0 0;">Pencil</div>
<div class="a" style="left:28px;top:433px;width:204px;height:15px;background:#5c5b5a;overflow:hidden"></div>
<div class="a" style="left:28px;top:433px;width:204px;height:1px;background:#6c6c6c"></div>
<div class="a" style="left:30px;top:436px;width:10px;height:10px;background:#ffffff;border:1px solid #202020"></div>
<div class="t" id="t49" style="left:44.30px;top:438.30px;font-size:7.97px;color:#e8e8e8;;transform:scaleX(1.1915);transform-origin:0 0;">8.5</div>
<div class="t" id="t50" style="left:68.40px;top:438.30px;font-size:7.97px;color:#f2f2f2;;transform:scaleX(1.0369);transform-origin:0 0;">Eraser</div>
<div class="a" style="left:28px;top:448px;width:204px;height:15px;background:#5c5b5a;overflow:hidden"></div>
<div class="a" style="left:28px;top:448px;width:204px;height:1px;background:#6c6c6c"></div>
<div class="a" style="left:30px;top:451px;width:10px;height:10px;background:#17c017;border:1px solid #202020"></div>
<div class="t" id="t51" style="left:44.30px;top:453.30px;font-size:7.97px;color:#e8e8e8;;transform:scaleX(1.0930);transform-origin:0 0;">15</div>
<div class="t" id="t52" style="left:68.40px;top:453.30px;font-size:7.97px;color:#f2f2f2;;transform:scaleX(1.1052);transform-origin:0 0;">Edge Pen</div>
<div class="a" style="left:28px;top:463px;width:204px;height:15px;background:#5c5b5a;overflow:hidden"></div>
<div class="a" style="left:28px;top:463px;width:204px;height:1px;background:#6c6c6c"></div>
<div class="a" style="left:30px;top:466px;width:10px;height:10px;background:#d6d6d6;border:1px solid #202020"></div>
<div class="t" id="t53" style="left:44.30px;top:468.30px;font-size:7.97px;color:#e8e8e8;;transform:scaleX(1.1243);transform-origin:0 0;">100</div>
<div class="t" id="t54" style="left:68.40px;top:468.30px;font-size:7.97px;color:#f2f2f2;;transform:scaleX(1.0634);transform-origin:0 0;">AirBrush</div>
<div class="a" style="left:28px;top:478px;width:204px;height:12px;background:#5c5b5a;overflow:hidden"></div>
<div class="a" style="left:28px;top:478px;width:204px;height:1px;background:#6c6c6c"></div>
<div class="a" style="left:30px;top:481px;width:10px;height:8px;background:#70d2ff;border:1px solid #202020"></div>
<div class="t" id="t55" style="left:44.30px;top:483.30px;font-size:7.97px;color:#e8e8e8;;transform:scaleX(1.0930);transform-origin:0 0;">80</div>
<div class="t" id="t56" style="left:68.40px;top:483.30px;font-size:7.97px;color:#f2f2f2;;transform:scaleX(1.2188);transform-origin:0 0;">Watercolor</div>
<div class="a" style="left:26px;top:489px;width:222px;height:1px;background:#2a2a2a"></div>
<svg style="left:217px;top:374px" width="13" height="13" viewBox="0 0 13 13"><path d="M10.40 6.50 L10.33 7.26 L11.72 7.88 L11.17 9.21 L9.74 8.67 L9.26 9.26 L8.67 9.74 L9.21 11.17 L7.88 11.72 L7.26 10.33 L6.50 10.40 L5.74 10.33 L5.12 11.72 L3.79 11.17 L4.33 9.74 L3.74 9.26 L3.26 8.67 L1.83 9.21 L1.28 7.88 L2.67 7.26 L2.60 6.50 L2.67 5.74 L1.28 5.12 L1.83 3.79 L3.26 4.33 L3.74 3.74 L4.33 3.26 L3.79 1.83 L5.12 1.28 L5.74 2.67 L6.50 2.60 L7.26 2.67 L7.88 1.28 L9.21 1.83 L8.67 3.26 L9.26 3.74 L9.74 4.33 L11.17 3.79 L11.72 5.12 L10.33 5.74Z" fill="#fff" stroke="#fff" stroke-width=".4" stroke-linejoin="round"/><circle cx="6.5" cy="6.5" r="1.3" fill="#4b9bdb"/></svg>
<div class="a" style="left:232px;top:372px;width:16px;height:117px;background:#2c2c2c"></div>
<div class="a" style="left:233px;top:383px;width:13px;height:100px;background:#393939;border-radius:4px"></div>
<div class="a" style="left:233px;top:383px;width:13px;height:42px;background:#7a7a7a;border-radius:5px"></div>
<svg style="left:236px;top:376px" width="7" height="6" viewBox="0 0 7 6"><path d="M3.5 .5L7 5.5H0Z" fill="#a8a8a8"/></svg>
<svg style="left:236px;top:481px" width="7" height="6" viewBox="0 0 7 6"><path d="M3.5 5.5L7 .5H0Z" fill="#a8a8a8"/></svg>
<div class="a" style="left:26px;top:489px;width:222px;height:23px;background:#262626"></div>
<div class="a" style="left:31px;top:492px;width:17px;height:17px;background:#484848;border:1px solid #565656;border-radius:3px"></div>
<svg style="left:31px;top:492px" width="17" height="17" viewBox="0 0 17 17"><path d="M5 11.5H4A3 3 0 0 1 4.5 6A4 4 0 0 1 12 5.5A3 3 0 0 1 13 11.5H12" fill="#eee"/><path d="M8.5 14.5V8.5M6.3 10.5L8.5 8.3L10.7 10.5" stroke="#eee" stroke-width="1.3" fill="none"/><rect x="6.5" y="9.5" width="4" height="3" fill="#eee"/></svg>
<div class="a" style="left:51px;top:492px;width:17px;height:17px;background:#484848;border:1px solid #565656;border-radius:3px"></div>
<svg style="left:51px;top:492px" width="17" height="17" viewBox="0 0 17 17"><path d="M4.5 3H10L12.5 5.5V14H4.5Z" fill="none" stroke="#ddd" stroke-width="1"/></svg>
<div class="a" style="left:71px;top:492px;width:23px;height:17px;background:#484848;border:1px solid #565656;border-radius:3px"></div>
<svg style="left:71px;top:492px" width="23" height="17" viewBox="0 0 23 17"><path d="M3.5 3H9L11.5 5.5V14H3.5Z" fill="none" stroke="#ddd" stroke-width="1"/><rect x="5" y="7" width="3" height="3" fill="#ddd"/><rect x="8" y="10" width="3" height="3" fill="#ddd"/><path d="M14.5 8H19.5L17 10.8Z" fill="#eee"/></svg>
<div class="a" style="left:97px;top:492px;width:17px;height:17px;background:#484848;border:1px solid #565656;border-radius:3px"></div>
<svg style="left:97px;top:492px" width="17" height="17" viewBox="0 0 17 17"><path d="M4.5 3H10L12.5 5.5V14H4.5Z" fill="none" stroke="#ddd" stroke-width="1"/><text x="8.6" y="12" font-size="7" font-family="Liberation Sans" fill="#ddd" text-anchor="middle">S</text></svg>
<div class="a" style="left:117px;top:492px;width:17px;height:17px;background:#484848;border:1px solid #565656;border-radius:3px"></div>
<svg style="left:117px;top:492px" width="17" height="17" viewBox="0 0 17 17"><path d="M3 5H7L8 6H14V13H3Z" fill="#eee"/></svg>
<div class="a" style="left:137px;top:492px;width:17px;height:17px;background:#484848;border:1px solid #565656;border-radius:3px"></div>
<svg style="left:137px;top:492px" width="17" height="17" viewBox="0 0 17 17"><rect x="4" y="6.5" width="7" height="7" fill="none" stroke="#ddd"/><path d="M6.5 6.5V4H13.5V11H11" fill="none" stroke="#ddd"/></svg>
<div class="a" style="left:158px;top:496px;width:1px;height:10px;background:#555"></div>
<div class="a" style="left:161px;top:492px;width:18px;height:17px;background:#484848;border:1px solid #565656;border-radius:3px"></div>
<svg style="left:161px;top:492px" width="18" height="17" viewBox="0 0 18 17"><path d="M4.5 5H13.5M7.5 5V3.5H10.5V5" stroke="#eee" stroke-width="1.1" fill="none"/><rect x="5.5" y="6.5" width="7" height="7.5" fill="#eee"/><path d="M7.5 8V13M9 8V13M10.5 8V13" stroke="#4a4a4a" stroke-width=".8"/></svg>
<div class="a" style="left:26px;top:512px;width:222px;height:18px;background:#232323"></div>
<div class="a" style="left:26px;top:514px;width:37px;height:16px;background:#3a3a3a"></div>
<div class="a" style="left:63px;top:512px;width:53px;height:16px;background:#262626;border:1px solid #363636"></div>
<div class="t" id="t57" style="left:30.90px;top:520.50px;font-size:7.97px;color:#c8c8c8;;transform:scaleX(0.9758);transform-origin:0 0;">Cọ: Pen</div>
<div class="t" id="t58" style="left:66.50px;top:519.30px;font-size:7.97px;color:#cfcfcf;;transform:scaleX(0.9900);transform-origin:0 0;">Kiểm soát cọ</div>
<div class="a" style="left:248px;top:56px;width:4px;height:474px;background:#262626"></div>
<div class="a" style="left:252px;top:58px;width:606px;height:472px;background:#262626"></div>
<div class="a" style="left:252px;top:73px;width:590px;height:442px;background:#4a4846"></div>
<div class="a" style="left:252px;top:58px;width:606px;height:15px;background:#242424"></div>
<div class="a" style="left:555px;top:57px;width:151px;height:16px;background:linear-gradient(#4d4d4d,#3b3b3b);border:1px solid #555;border-bottom:none;border-radius:2px 2px 0 0"></div>
<div class="a" style="left:403px;top:60px;width:1px;height:13px;background:#3a3a3a"></div>
<div class="t" id="t59" style="left:312.75px;top:63.65px;font-size:7.97px;color:#bcbcbc;;transform:scaleX(1.0266);transform-origin:0 0;">Untitled</div>
<div class="t" id="t60" style="left:464.75px;top:63.65px;font-size:7.97px;color:#bcbcbc;;transform:scaleX(1.0451);transform-origin:0 0;">Untitled</div>
<div class="t" id="t61" style="left:616.50px;top:61.90px;font-size:7.97px;color:#e4e4e4;;transform:scaleX(1.0173);transform-origin:0 0;">Untitled</div>
<div class="a" style="left:467px;top:160px;width:294px;height:294px;background:#fdc8c8"></div>
<svg style="left:0;top:0" width="1024" height="576" viewBox="0 0 1024 576">
<defs><radialGradient id="bl"><stop offset="0" stop-color="#f08080"/><stop offset="0.45" stop-color="#f2868a"/><stop offset="0.75" stop-color="#f08a90" stop-opacity=".55"/><stop offset="1" stop-color="#f08a90" stop-opacity="0"/></radialGradient></defs>
<path d="M527 305 C528 285 535 268 548 254 C562 240 580 232 601 231 C625 231 648 238 663 250 C676 260 684 272 689 286 L696.5 297.5 C698 287 703 276 711 275 C718 275 721 285 720 302 C726 306 732 311 732 317 C731 323 726 325 718 324 L710 324 L709 327 C700 329 690 332 679 334 C668 337 655 340 643 343 L611 349 L594 344 C580 340 565 334 551 328 C540 322 532 315 527 307 Z" fill="#84d9fa"/>
<path d="M526.5 306 C528 318 532 336 544 349 C556 361 575 370 611 372 C650 369 672 360 683 353 C690 350 695 346 700 340 C703 337 706 332 709 324 C700 326 690 329 679 331.5 C668 334 655 337 643 340 L641.5 344 C632 343 622 342.5 614 343 L611.5 346.8 C608 346.5 603 346.5 599 345.2 L594 341.5 C580 338 565 332 551 325 C540 319 532 313 526.5 306 Z" fill="#ffffff"/>
<path d="M541 331 C552 337 563 342 573 346" stroke="#74c8ec" stroke-width="1.3" fill="none"/>
<path d="M624 357 C645 355 662 351 680 345" stroke="#74c8ec" stroke-width="1.3" fill="none"/>
<path d="M569 361 C577 364 586 367 596 368" stroke="#74c8ec" stroke-width="1.3" fill="none"/>
<circle cx="556.5" cy="300.5" r="12.5" fill="url(#bl)"/>
<circle cx="560.3" cy="289.5" r="2.3" fill="#111"/>
<path d="M521 225 C516 216 515 205 518 196 C522 185 533 179 546 178.5 C560 178 571 185 575 197 C578 209 574 222 564 228 C556 232 545 232 528 228 L522.5 236.5 Z" fill="none" stroke="#ffffff" stroke-width="1.5" stroke-linejoin="round"/>
<path d="M546 216 C540 211 534 207 534 201.5 C534 197.5 537 195.5 540 195.5 C543 195.5 545 197 546 199 C547 197 549 195.5 552 195.5 C555.5 195.5 558 197.5 558 201.5 C558 207 552 211 546 216 Z" fill="#f87574"/>
<path d="M663.5 220.5 L687 252" stroke="#fff" stroke-width="1.4" fill="none"/>
<path d="M668 232 L678 228 M671 238 L681 234.5" stroke="#fff" stroke-width="1.4" fill="none"/>
<path d="M543.5 375 C552 380 570 385 592 388" stroke="#fff" stroke-width="1.4" fill="none"/>
<path d="M555 378 L556 383 M565 380 L566 385" stroke="#fff" stroke-width="1.3" fill="none"/>
</svg>
<div class="a" style="left:842px;top:73px;width:14px;height:442px;background:linear-gradient(to right,#3f3e3c,#343331)"></div>
<div class="a" style="left:843px;top:234px;width:12px;height:116px;background:linear-gradient(to right,#7e7e7e,#6c6c6c);border-radius:5px"></div>
<svg style="left:846px;top:77px" width="7" height="6" viewBox="0 0 7 6"><path d="M3.5 .5L7 5.5H0Z" fill="#9a9a9a"/></svg>
<svg style="left:846px;top:507px" width="7" height="6" viewBox="0 0 7 6"><path d="M3.5 5.5L7 .5H0Z" fill="#9a9a9a"/></svg>
<div class="a" style="left:252px;top:515px;width:596px;height:15px;background:linear-gradient(#3b3a38,#2d2d2c)"></div>
<div class="a" style="left:451px;top:516px;width:168px;height:13px;background:linear-gradient(#828282,#6e6e6e);border-radius:5px"></div>
<svg style="left:253px;top:518px" width="6" height="9" viewBox="0 0 6 9"><path d="M0 4.5L6 0V9Z" fill="#9a9a9a"/></svg>
<div class="a" style="left:848px;top:515px;width:8px;height:15px;background:#262626"></div>
<div class="a" style="left:252px;top:529px;width:604px;height:1px;background:#454545"></div>
<svg style="left:850px;top:519px" width="6" height="9" viewBox="0 0 6 9"><path d="M6 4.5L0 0V9Z" fill="#9a9a9a"/></svg>
<div class="a" style="left:856px;top:56px;width:168px;height:474px;background:#232323"></div>
<div class="a" style="left:857px;top:56px;width:2px;height:474px;background:#1b1b1b"></div>
<div class="a" style="left:860px;top:57px;width:164px;height:1px;background:#8cb0ca"></div>
<div class="a" style="left:860px;top:58px;width:164px;height:15px;background:linear-gradient(#3a3939,#343231)"></div>
<div class="t" id="t62" style="left:924.25px;top:62.90px;font-size:7.97px;color:#cccccc;;transform:scaleX(0.9224);transform-origin:0 0;">Lớp</div>
<svg style="left:1002px;top:61px" width="8" height="8" viewBox="0 0 8 8"><path d="M4.5 1.5H1V7H6.5V3.5" fill="none" stroke="#b8b8b8" stroke-width="1"/><path d="M4 4L7.5 .5" stroke="#b8b8b8" stroke-width="1"/><circle cx="7.2" cy=".8" r=".9" fill="#ddd"/></svg>
<svg style="left:1014px;top:61px" width="8" height="8" viewBox="0 0 8 8"><path d="M1 1L7 7M7 1L1 7" stroke="#dcdcdc" stroke-width="1.9"/></svg>
<div class="a" style="left:860px;top:73px;width:164px;height:60px;background:#282828"></div>
<div class="t" id="t63" style="left:865.50px;top:79.80px;font-size:8.85px;color:#d2d2d2;;transform:scaleX(0.9433);transform-origin:0 0;">Độ trong</div>
<div class="a" style="left:905px;top:77px;width:85px;height:12px;background:linear-gradient(to right,#5eb6f2,#4a92d6);border:1px solid #3f6d98"></div>
<div class="t" id="t64" style="left:996.00px;top:80.37px;font-size:8.22px;color:#d2d2d2;;transform:scaleX(0.9973);transform-origin:0 0;">100 %</div>
<div class="t" id="t65" style="left:865.50px;top:98.55px;font-size:8.85px;color:#d2d2d2;;transform:scaleX(0.9121);transform-origin:0 0;">Pha trộn</div>
<div class="a" style="left:908px;top:94px;width:111px;height:16px;background:#4a4a4a"></div>
<div class="t" id="t66" style="left:909.75px;top:98.55px;font-size:8.85px;color:#dadada;;transform:scaleX(0.8721);transform-origin:0 0;">Bình thường</div>
<svg style="left:1010px;top:100px" width="7" height="4" viewBox="0 0 7 4"><path d="M0 0H7L3.5 4Z" fill="#aaa"/></svg>
<div class="a" style="left:868px;top:118px;width:9px;height:9px;border:1px solid #cfcfcf"></div>
<div class="t" id="t67" style="left:880.50px;top:118.30px;font-size:8.85px;color:#cfcfcf;;transform:scaleX(0.8956);transform-origin:0 0;">Bảo vệ alpha</div>
<div class="a" style="left:936px;top:118px;width:9px;height:9px;border:1px solid #4a4a4a"></div>
<div class="t" id="t68" style="left:948.50px;top:118.30px;font-size:8.85px;color:#6e6e6e;;transform:scaleX(0.8765);transform-origin:0 0;">Xén bớt</div>
<div class="a" style="left:986px;top:118px;width:9px;height:9px;border:1px solid #cfcfcf"></div>
<div class="t" id="t69" style="left:997.50px;top:118.30px;font-size:8.85px;color:#cfcfcf;;transform:scaleX(0.8956);transform-origin:0 0;">Khóa</div>
<div class="a" style="left:864px;top:133px;width:143px;height:356px;background:#494745"></div>
<div class="a" style="left:864px;top:133px;width:143px;height:28px;background:#5a5857"></div>
<div class="a" style="left:864px;top:161px;width:143px;height:31px;background:#1a2a3a"></div>
<div class="a" style="left:878px;top:162px;width:129px;height:29px;background:#4a90d2"></div>
<div class="a" style="left:864px;top:162px;width:14px;height:29px;background:#5a5857"></div>
<div class="a" style="left:889px;top:134px;width:26px;height:26px;background-color:#fff;background-image:linear-gradient(45deg,#e4dcdc 25%,transparent 25%,transparent 75%,#e4dcdc 75%),linear-gradient(45deg,#e4dcdc 25%,transparent 25%,transparent 75%,#e4dcdc 75%);background-size:6px 6px;background-position:0 0,3px 3px"></div>
<svg style="left:889px;top:134px" width="26" height="26" viewBox="0 0 26 26"><path d="M5 12C6 8 10 6 14 6C18 6 21 8.5 22.5 11C23.5 13 22 15.5 17 16.5C12 17 7 16.5 5.5 14.5Z" fill="#6ccaf2"/><path d="M6 13.5C9 16 14 16.8 18 16" stroke="#dff4ff" stroke-width="1.2" fill="none"/></svg>
<div class="a" style="left:889px;top:164px;width:26px;height:26px;background:#fdc8c8"></div>
<svg style="left:895px;top:165px" width="3" height="2" viewBox="0 0 3 2"><path d="M0 0H3L1.5 2Z" fill="#e87a7a"/></svg>
<svg style="left:866px;top:143px" width="8" height="8" viewBox="0 0 8 8"><circle cx="4" cy="4" r="3.6" fill="#d8d8d8"/><circle cx="4" cy="4" r="1.2" fill="#bdbdbd"/></svg>
<svg style="left:866px;top:173px" width="8" height="8" viewBox="0 0 8 8"><circle cx="4" cy="4" r="3.6" fill="#d8d8d8"/><circle cx="4" cy="4" r="1.2" fill="#bdbdbd"/></svg>
<div class="t" id="t70" style="left:927.70px;top:144.00px;font-size:8.85px;color:#ececec;;transform:scaleX(0.9581);transform-origin:0 0;">Lớp2</div>
<div class="t" id="t71" style="left:927.80px;top:172.92px;font-size:9.61px;color:#ffffff;font-weight:bold;transform:scaleX(0.9606);transform-origin:0 0;">Lớp1</div>
<svg style="left:990px;top:171px" width="15" height="15" viewBox="0 0 15 15"><path d="M12.20 7.50 L12.11 8.42 L13.88 9.19 L13.21 10.81 L11.41 10.11 L10.82 10.82 L10.11 11.41 L10.81 13.21 L9.19 13.88 L8.42 12.11 L7.50 12.20 L6.58 12.11 L5.81 13.88 L4.19 13.21 L4.89 11.41 L4.18 10.82 L3.59 10.11 L1.79 10.81 L1.12 9.19 L2.89 8.42 L2.80 7.50 L2.89 6.58 L1.12 5.81 L1.79 4.19 L3.59 4.89 L4.18 4.18 L4.89 3.59 L4.19 1.79 L5.81 1.12 L6.58 2.89 L7.50 2.80 L8.42 2.89 L9.19 1.12 L10.81 1.79 L10.11 3.59 L10.82 4.18 L11.41 4.89 L13.21 4.19 L13.88 5.81 L12.11 6.58Z" fill="#fff" stroke="#fff" stroke-width=".5" stroke-linejoin="round"/><circle cx="7.5" cy="7.5" r="1.7" fill="#4a90d2"/></svg>
<div class="a" style="left:1007px;top:133px;width:17px;height:356px;background:#282828"></div>
<div class="a" style="left:1008px;top:141px;width:14px;height:338px;background:linear-gradient(to right,#7a7a7a,#686868);border-radius:5px"></div>
<svg style="left:1012px;top:135px" width="7" height="6" viewBox="0 0 7 6"><path d="M3.5 .5L7 5.5H0Z" fill="#a8a8a8"/></svg>
<svg style="left:1012px;top:482px" width="7" height="6" viewBox="0 0 7 6"><path d="M3.5 5.5L7 .5H0Z" fill="#a8a8a8"/></svg>
<div class="a" style="left:860px;top:489px;width:164px;height:23px;background:#262626"></div>
<div class="a" style="left:866px;top:492px;width:17px;height:17px;background:#484848;border:1px solid #565656;border-radius:3px"></div>
<svg style="left:866px;top:492px" width="17" height="17" viewBox="0 0 17 17"><path d="M4.5 3H10L12.5 5.5V14H4.5Z" fill="none" stroke="#ddd" stroke-width="1"/><path d="M10 3V5.5H12.5" fill="#ddd"/></svg>
<div class="a" style="left:886px;top:492px;width:17px;height:17px;background:#484848;border:1px solid #565656;border-radius:3px"></div>
<svg style="left:886px;top:492px" width="17" height="17" viewBox="0 0 17 17"><path d="M4.5 3H10L12.5 5.5V14H4.5Z" fill="none" stroke="#ddd" stroke-width="1"/><text x="8.5" y="12" font-size="7" font-family="Liberation Sans" fill="#ddd" text-anchor="middle">8</text></svg>
<div class="a" style="left:906px;top:492px;width:17px;height:17px;background:#484848;border:1px solid #565656;border-radius:3px"></div>
<svg style="left:906px;top:492px" width="17" height="17" viewBox="0 0 17 17"><path d="M4.5 3H10L12.5 5.5V14H4.5Z" fill="none" stroke="#ddd" stroke-width="1"/><text x="8.5" y="12" font-size="7" font-family="Liberation Sans" fill="#ddd" text-anchor="middle">1</text></svg>
<div class="a" style="left:927px;top:492px;width:22px;height:17px;background:#484848;border:1px solid #565656;border-radius:3px"></div>
<svg style="left:927px;top:492px" width="22" height="17" viewBox="0 0 22 17"><path d="M4.5 3H10L12.5 5.5V14H4.5Z" fill="none" stroke="#ddd" stroke-width="1"/><path d="M11 9V15M8 12H14" stroke="#eee" stroke-width="1.6"/><path d="M15 8H20L17.5 10.8Z" fill="#eee"/></svg>
<div class="a" style="left:952px;top:492px;width:17px;height:17px;background:#484848;border:1px solid #565656;border-radius:3px"></div>
<svg style="left:952px;top:492px" width="17" height="17" viewBox="0 0 17 17"><path d="M3 5H7L8 6H14V13H3Z" fill="#eee"/></svg>
<div class="a" style="left:973px;top:496px;width:1px;height:10px;background:#555"></div>
<div class="a" style="left:977px;top:492px;width:18px;height:17px;background:#484848;border:1px solid #565656;border-radius:3px"></div>
<svg style="left:977px;top:492px" width="18" height="17" viewBox="0 0 18 17"><rect x="4" y="6.5" width="7" height="7" fill="none" stroke="#ddd"/><path d="M6.5 6.5V4H13.5V11H11" fill="none" stroke="#ddd"/></svg>
<div class="a" style="left:1014px;top:492px;width:8px;height:17px;background:#3c3c3c;border-radius:3px"></div>
<div class="a" style="left:860px;top:512px;width:164px;height:18px;background:#232323"></div>
<div class="a" style="left:863px;top:514px;width:36px;height:14px;background:#262626"></div>
<div class="a" style="left:899px;top:513px;width:22px;height:17px;background:#3a3a3a"></div>
<div class="t" id="t72" style="left:865.00px;top:518.84px;font-size:7.59px;color:#dadada;;transform:scaleX(1.0732);transform-origin:0 0;">Hoa tiêu</div>
<div class="t" id="t73" style="left:903.50px;top:519.83px;font-size:8.60px;color:#cfcfcf;;transform:scaleX(0.8419);transform-origin:0 0;">Lớp</div>
<div class="a" style="left:0px;top:530px;width:1024px;height:16px;background:#222222"></div>
<div class="t" id="t74" style="left:4.40px;top:536.10px;font-size:7.97px;color:#d4d4d4;;transform:scaleX(1.0447);transform-origin:0 0;">4724 * 4724 pixel</div>
<div class="t" id="t75" style="left:76.00px;top:536.10px;font-size:7.97px;color:#d4d4d4;;transform:scaleX(1.0683);transform-origin:0 0;">(20 * 20cm)</div>
<div class="t" id="t76" style="left:127.80px;top:536.10px;font-size:7.97px;color:#d4d4d4;;transform:scaleX(1.0590);transform-origin:0 0;">600 dpi</div>
<div class="t" id="t77" style="left:163.30px;top:536.10px;font-size:7.97px;color:#d4d4d4;;transform:scaleX(1.0193);transform-origin:0 0;">8 %</div>
<div class="t" id="t78" style="left:183.60px;top:536.10px;font-size:7.97px;color:#d4d4d4;;transform:scaleX(1.0237);transform-origin:0 0;">( 6009, 5217 )</div>
<div class="t" id="t79" style="left:241.40px;top:536.10px;font-size:7.97px;color:#d4d4d4;;transform:scaleX(1.1205);transform-origin:0 0;">Vẽ một đường thẳng bằng cách giữ phím Shift, Thay đổi cỡ cọ bằng cách giữ phím Ctrl, Alt và kéo</div>
<div class="a" style="left:0px;top:546px;width:1024px;height:30px;background:linear-gradient(to right,#24246a 0%,#27276c 40%,#2a2a6a 70%,#2c2b6a 100%)"></div>
<div class="a" style="left:330px;top:546px;width:690px;height:30px;background:radial-gradient(ellipse 70px 22px at 180px 18px,rgba(80,78,150,.35),rgba(80,78,150,0)),radial-gradient(ellipse 45px 18px at 360px 14px,rgba(80,78,150,.3),rgba(80,78,150,0)),radial-gradient(ellipse 60px 20px at 560px 22px,rgba(70,70,140,.2),rgba(70,70,140,0))"></div>
<div class="a" style="left:294px;top:546px;width:36px;height:30px;background:#4a4596"></div>
<div class="a" style="left:187px;top:574px;width:30px;height:2px;background:#a7a6ec"></div>
<div class="a" style="left:223.5px;top:574px;width:30.0px;height:2px;background:#a7a6ec"></div>
<div class="a" style="left:259.75px;top:574px;width:30.0px;height:2px;background:#a7a6ec"></div>
<div class="a" style="left:294.75px;top:574px;width:35.0px;height:2px;background:#a7a6ec"></div>
<svg style="left:11px;top:554px" width="14" height="13" viewBox="0 0 14 13"><path d="M.8 1.5L4.6 1V5.8H.8ZM5.6 .9L13.3 0V5.8H5.6ZM.8 6.8H4.6V11.6L.8 11.1ZM5.6 6.8H13.3V12.6L5.6 11.7Z" fill="#fff"/></svg>
<svg style="left:47px;top:554px" width="14" height="14" viewBox="0 0 14 14"><circle cx="8.8" cy="4.8" r="3.9" fill="none" stroke="#f0f0f0" stroke-width="1.1"/><path d="M6 7.6L1.2 12.6" stroke="#f0f0f0" stroke-width="1.2"/></svg>
<svg style="left:82px;top:555px" width="17" height="12" viewBox="0 0 17 12"><rect x="4.2" y=".6" width="8.6" height="10" rx="1" fill="none" stroke="#e8e8e8" stroke-width="1"/><path d="M4.2 2.5H.6V8.7H4.2M12.8 2.5H16.4V8.7H12.8" fill="none" stroke="#e8e8e8" stroke-width="1"/></svg>
<svg style="left:118px;top:553px" width="19" height="16" viewBox="0 0 19 16"><rect x="1" y="1" width="8.6" height="7.4" rx="1" fill="#f6e6e6"/><rect x="10.3" y="1" width="7.6" height="7.4" rx="1" fill="#f6e6e6"/><rect x="6" y="7.8" width="8.6" height="7.2" rx="1" fill="#f6e6e6"/><circle cx="5" cy="4.6" r="1.6" fill="#d84a4a"/><path d="M14 3V6" stroke="#d86a4a" stroke-width="1"/><path d="M9 13V10.5H11.5V13" fill="none" stroke="#c04040" stroke-width="1"/></svg>
<svg style="left:156px;top:553px" width="17" height="15" viewBox="0 0 17 15"><path d="M1 1.5H6.5L8 3H16V14H1Z" fill="#f5d56a"/><path d="M1 4.5H16" stroke="#e8c050" stroke-width=".6"/><path d="M4 14V9.5H13V14H10.5V11.5H6.5V14Z" fill="#2a9ad6"/></svg>
<svg style="left:193px;top:552px" width="19" height="18" viewBox="0 0 19 18"><path d="M9.5 .5C14.5 .5 18.5 3.8 18.5 8.5C18.5 13.2 14.5 16.5 9.5 16.5C8 16.5 6.5 16.2 5.2 15.6L1.5 17.2L2.5 13.5C1.2 12 .5 10.3 .5 8.5C.5 3.8 4.5 .5 9.5 .5Z" fill="#fdfdff"/><path d="M1.2 11C1.6 13 2.5 14 2.5 14L1.5 17.2L5.2 15.6" fill="none" stroke="#1f6fe6" stroke-width="1.3"/><text x="9.6" y="10.8" font-size="5.6" font-family="Liberation Sans" font-weight="bold" fill="#2b68e0" text-anchor="middle">Zalo</text></svg>
<svg style="left:229px;top:551px" width="19" height="19" viewBox="0 0 19 19"><ellipse cx="9.5" cy="9.5" rx="8.6" ry="9" fill="#e5202a"/><ellipse cx="9.5" cy="9.5" rx="4" ry="6.6" fill="#26266a"/><ellipse cx="9.5" cy="9.5" rx="8.6" ry="9" fill="none" stroke="#c01020" stroke-width=".6"/></svg>
<svg style="left:265px;top:551px" width="20" height="19" viewBox="0 0 20 19"><path d="M2 10C1 6 5 3 10 3.5C15 4 18 7 17.5 10.5C17 13 14.5 12 13 13.5C11.5 15 12.5 17 9.5 17C5 17 2.8 14 2 10Z" fill="#e8eef4"/><circle cx="6" cy="8" r="1.5" fill="#e84040"/><circle cx="9.5" cy="6.5" r="1.4" fill="#f0c030"/><circle cx="5.5" cy="12" r="1.4" fill="#40a0e0"/><circle cx="8.5" cy="10" r="1.5" fill="#2a2a6a"/><path d="M9 17L16.5 2.5" stroke="#d8a060" stroke-width="1.8"/><path d="M15.5 3L18 .8" stroke="#e06a3a" stroke-width="2"/></svg>
<svg style="left:302px;top:551px" width="19" height="19" viewBox="0 0 19 19"><rect x=".5" y=".5" width="18" height="18" rx="4" fill="#f4f4f8"/><circle cx="9.8" cy="10.6" r="5.4" fill="#2db86b"/><path d="M4.4 10.6A5.4 5.4 0 0 0 15.2 10.6Z" fill="#2a8fd8"/><path d="M4.6 9C5 6 7 4.8 9 4.2L8.6 2.5L11.5 5.5C8.5 6 6.5 7.5 4.6 9Z" fill="#e83a3a"/><circle cx="10.5" cy="10" r="2.3" fill="#30c8a8"/></svg>
<svg style="left:831px;top:554px" width="12" height="12" viewBox="0 0 12 12"><circle cx="8.5" cy="3.2" r="2.3" fill="none" stroke="#eee" stroke-width="1"/><path d="M5 11C5 8 6.5 6.3 8.5 6.3C10.5 6.3 12 8 12 11" fill="none" stroke="#eee" stroke-width="1"/><circle cx="4" cy="6.5" r="2" fill="none" stroke="#eee" stroke-width="1"/><path d="M.6 12C.6 10 2 9 4 9C5.5 9 6.5 10 7 11" fill="none" stroke="#eee" stroke-width="1"/></svg>
<svg style="left:859px;top:557px" width="11" height="6" viewBox="0 0 11 6"><path d="M.8 5.5L5.5 .8L10.2 5.5" fill="none" stroke="#eee" stroke-width="1.1"/></svg>
<svg style="left:876px;top:555px" width="13" height="10" viewBox="0 0 13 10"><rect x="2.5" y="3" width="10" height="6.5" fill="#eee"/><rect x="3.8" y="4.2" width="7.4" height="4" fill="none" stroke="#2a2a6a" stroke-width=".6"/><path d="M.5 3L3 .5M.5 .5L3 3" stroke="#eee" stroke-width=".9"/></svg>
<svg style="left:894px;top:554px" width="11" height="12" viewBox="0 0 11 12"><path d="M.6 4H2.8L5.8 1V11L2.8 8H.6Z" fill="none" stroke="#eee" stroke-width="1"/><path d="M7.3 4C8 5 8 7 7.3 8M9 2.6C10.3 4.5 10.3 7.5 9 9.4" fill="none" stroke="#eee" stroke-width="1"/></svg>
<div class="t" id="t80" style="left:913.50px;top:556.97px;font-size:9.10px;color:#f0f0f0;;transform:scaleX(0.8875);transform-origin:0 0;">ENG</div>
<div class="t" id="t81" style="left:944.00px;top:550.90px;font-size:7.97px;color:#f0f0f0;;transform:scaleX(1.1111);transform-origin:0 0;">7:28 AM</div>
<div class="t" id="t82" style="left:940.00px;top:564.41px;font-size:7.84px;color:#f0f0f0;;transform:scaleX(1.1370);transform-origin:0 0;">6/20/2021</div>
<svg style="left:992px;top:554px" width="14" height="13" viewBox="0 0 14 13"><path d="M.7 .7H13.3V10H8.5L7 11.8L5.5 10H.7Z" fill="none" stroke="#f0f0f0" stroke-width="1.1"/></svg>
<div class="a" style="left:1020px;top:546px;width:1px;height:30px;background:#5a5a8a"></div>
</body></html>
